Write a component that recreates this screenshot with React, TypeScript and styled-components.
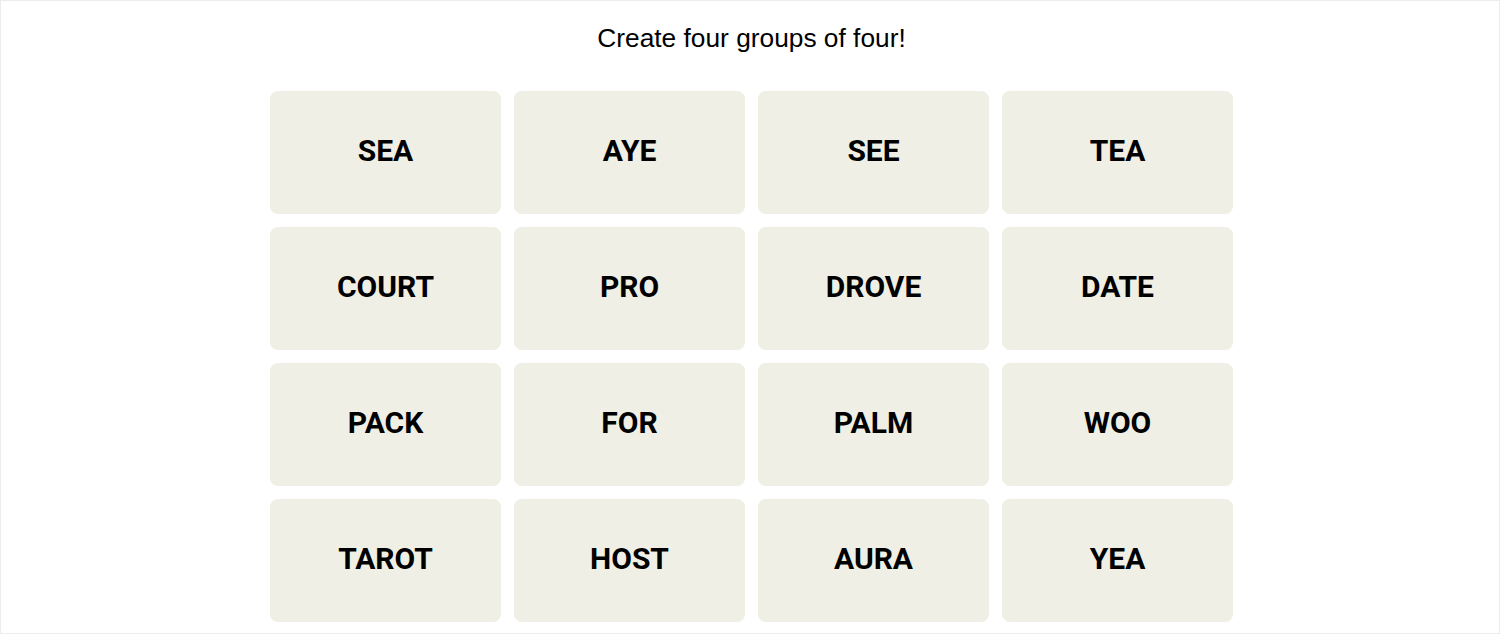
import React from 'react';
import styled, { createGlobalStyle } from 'styled-components';

const GlobalStyle = createGlobalStyle`
  html, body {
    margin: 0;
    padding: 0;
    background: #ffffff;
  }
  * {
    box-sizing: border-box;
  }
`;

const words = [
  'SEA', 'AYE', 'SEE', 'TEA',
  'COURT', 'PRO', 'DROVE', 'DATE',
  'PACK', 'FOR', 'PALM', 'WOO',
  'TAROT', 'HOST', 'AURA', 'YEA',
];

const App = () => {
  return (
    <Page>
      <GlobalStyle />
      <Title>Create four groups of four!</Title>
      <Board>
        {words.map((w) => (
          <Tile key={w}>{w}</Tile>
        ))}
      </Board>
    </Page>
  );
};

const Page = styled.div`
  width: 100vw;
  height: 100vh;
  border: 1px solid #ececec;
  display: flex;
  flex-direction: column;
  align-items: center;
  padding: 21px 0 0 3px;
  overflow: hidden;
  font-family: Roboto, 'Liberation Sans', sans-serif;
`;

const Title = styled.h1`
  margin: 0 0 37px;
  font-family: 'Liberation Sans', Arial, sans-serif;
  font-size: 26.3px;
  line-height: 32px;
  font-weight: 400;
  color: #000000;
`;

const Board = styled.div`
  display: grid;
  grid-template-columns: repeat(4, 231px);
  grid-auto-rows: 123px;
  gap: 13px;
`;

const Tile = styled.div`
  display: flex;
  justify-content: center;
  align-items: center;
  padding-bottom: 4px;
  background-color: #efefe6;
  border-radius: 8px;
  font-size: 30px;
  font-weight: 700;
  color: #000000;
  text-transform: uppercase;
  cursor: pointer;
  user-select: none;
`;

export default App;
